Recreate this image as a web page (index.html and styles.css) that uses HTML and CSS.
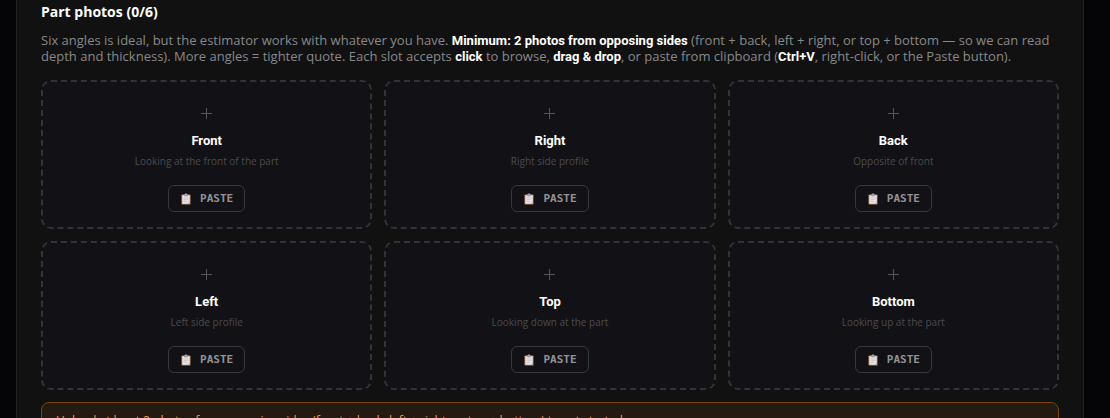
FILE: index.html
```html
<!DOCTYPE html>
<html lang="en">

<head>
  <meta charset="UTF-8">
  <meta name="viewport" content="width=device-width, initial-scale=1.0">
  <link rel="stylesheet" href="styles.css">
  <title>Part photos</title>
</head>

<body>
  <svg class="sprite" aria-hidden="true">
    <symbol id="clipboard" viewBox="0 0 10 12">
      <rect x="0.5" y="1.5" width="9" height="10" rx="0.8" fill="#c08552" />
      <path d="M1.3 2.3h7.4v8.4H1.3z" fill="#e9e6ec" />
      <path d="M8.7 8.2v2.5H6.3z" fill="#b9b5c4" />
      <path d="M3 1.3h1a1 1 0 0 1 2 0h1v1.9H3z" fill="#9a9caa" />
      <path d="M2.5 5h5M2.5 6.7h5M2.5 8.4h3.4" stroke="#b4b2be" stroke-width="0.6" />
    </symbol>
    <symbol id="plus" viewBox="0 0 11 11">
      <path d="M5.5 0v11M0 5.5h11" stroke="#555559" stroke-width="1" />
    </symbol>
  </svg>

  <main class="panel">
    <h2 class="title">Part photos (0/6)</h2>
    <p class="intro">Six angles is ideal, but the estimator works with whatever you have. <strong>Minimum: 2 photos from opposing sides</strong> (front + back, left + right, or top + bottom — so we can read depth and thickness). More angles = tighter quote. Each slot accepts <strong>click</strong> to browse, <strong>drag &amp; drop</strong>, or paste from clipboard (<strong>Ctrl+V</strong>, right-click, or the Paste button).</p>

    <div class="slots">
      <div class="slot">
        <input class="slot-file" id="file-front" type="file" accept="image/*">
        <label class="slot-label" for="file-front">
          <svg class="plus"><use href="#plus" /></svg>
          <span class="name">Front</span>
          <span class="hint">Looking at the front of the part</span>
        </label>
        <button type="button" class="paste"><svg class="clip"><use href="#clipboard" /></svg>PASTE</button>
      </div>
      <div class="slot">
        <input class="slot-file" id="file-right" type="file" accept="image/*">
        <label class="slot-label" for="file-right">
          <svg class="plus"><use href="#plus" /></svg>
          <span class="name">Right</span>
          <span class="hint">Right side profile</span>
        </label>
        <button type="button" class="paste"><svg class="clip"><use href="#clipboard" /></svg>PASTE</button>
      </div>
      <div class="slot">
        <input class="slot-file" id="file-back" type="file" accept="image/*">
        <label class="slot-label" for="file-back">
          <svg class="plus"><use href="#plus" /></svg>
          <span class="name">Back</span>
          <span class="hint">Opposite of front</span>
        </label>
        <button type="button" class="paste"><svg class="clip"><use href="#clipboard" /></svg>PASTE</button>
      </div>
      <div class="slot">
        <input class="slot-file" id="file-left" type="file" accept="image/*">
        <label class="slot-label" for="file-left">
          <svg class="plus"><use href="#plus" /></svg>
          <span class="name">Left</span>
          <span class="hint">Left side profile</span>
        </label>
        <button type="button" class="paste"><svg class="clip"><use href="#clipboard" /></svg>PASTE</button>
      </div>
      <div class="slot">
        <input class="slot-file" id="file-top" type="file" accept="image/*">
        <label class="slot-label" for="file-top">
          <svg class="plus"><use href="#plus" /></svg>
          <span class="name">Top</span>
          <span class="hint">Looking down at the part</span>
        </label>
        <button type="button" class="paste"><svg class="clip"><use href="#clipboard" /></svg>PASTE</button>
      </div>
      <div class="slot">
        <input class="slot-file" id="file-bottom" type="file" accept="image/*">
        <label class="slot-label" for="file-bottom">
          <svg class="plus"><use href="#plus" /></svg>
          <span class="name">Bottom</span>
          <span class="hint">Looking up at the part</span>
        </label>
        <button type="button" class="paste"><svg class="clip"><use href="#clipboard" /></svg>PASTE</button>
      </div>
    </div>

    <p class="notice">Upload at least 2 photos from opposing sides (front + back, left + right, or top + bottom) to get started.</p>
  </main>
</body>

</html>
```
FILE: styles.css
```css
* {
  margin: 0;
  padding: 0;
  box-sizing: border-box;
}

html {
  overflow: hidden;
}

body {
  padding: 0 26px 0 16px;
  background: #050507;
  color: #fff;
  font-family: "Open Sans", "Liberation Sans", sans-serif;
}

.sprite {
  display: none;
}

.panel {
  padding: 3px 24px 24px;
  background: #111;
  border: 1px solid #222225;
  border-width: 0 1px;
}

.title {
  margin-bottom: 12px;
  font-size: 14px;
  line-height: 17px;
}

.intro {
  margin-bottom: 16px;
  color: #88888a;
  font-size: 13px;
  line-height: 16px;
}

.intro strong {
  color: #fff;
  font-family: Roboto, sans-serif;
  line-height: 1;
}

.slots {
  display: grid;
  grid-template-columns: repeat(3, 1fr);
  gap: 12px;
}

.slot {
  display: flex;
  flex-direction: column;
  align-items: center;
  gap: 17px;
  padding: 26px 16px 15px;
  background: #121116;
  border: 2px dashed #333336;
  border-radius: 10px;
}

.slot-file {
  position: absolute;
  width: 1px;
  height: 1px;
  opacity: 0;
}

.slot-label {
  display: flex;
  flex-direction: column;
  align-items: center;
  cursor: pointer;
}

.plus {
  width: 11px;
  height: 11px;
  margin-bottom: 14px;
}

.name {
  margin-bottom: 5px;
  font-family: Roboto, sans-serif;
  font-size: 13px;
  font-weight: 700;
  line-height: 16px;
}

.hint {
  color: #4b4b4e;
  font-size: 10px;
  line-height: 14px;
}

.paste {
  display: flex;
  align-items: center;
  gap: 9px;
  padding: 5px 11px 5px 12px;
  background: transparent;
  border: 1px solid #38383b;
  border-radius: 6px;
  color: #929294;
  font: bold 11px/15px "DejaVu Sans Mono", monospace;
  cursor: pointer;
}

.clip {
  width: 10px;
  height: 12px;
}

.notice {
  margin-top: 12px;
  padding: 10px 14px;
  background: #231a10;
  border: 1px solid #7a4708;
  border-radius: 8px;
  color: #f59e4b;
  font-size: 12px;
  line-height: 16px;
}
```
